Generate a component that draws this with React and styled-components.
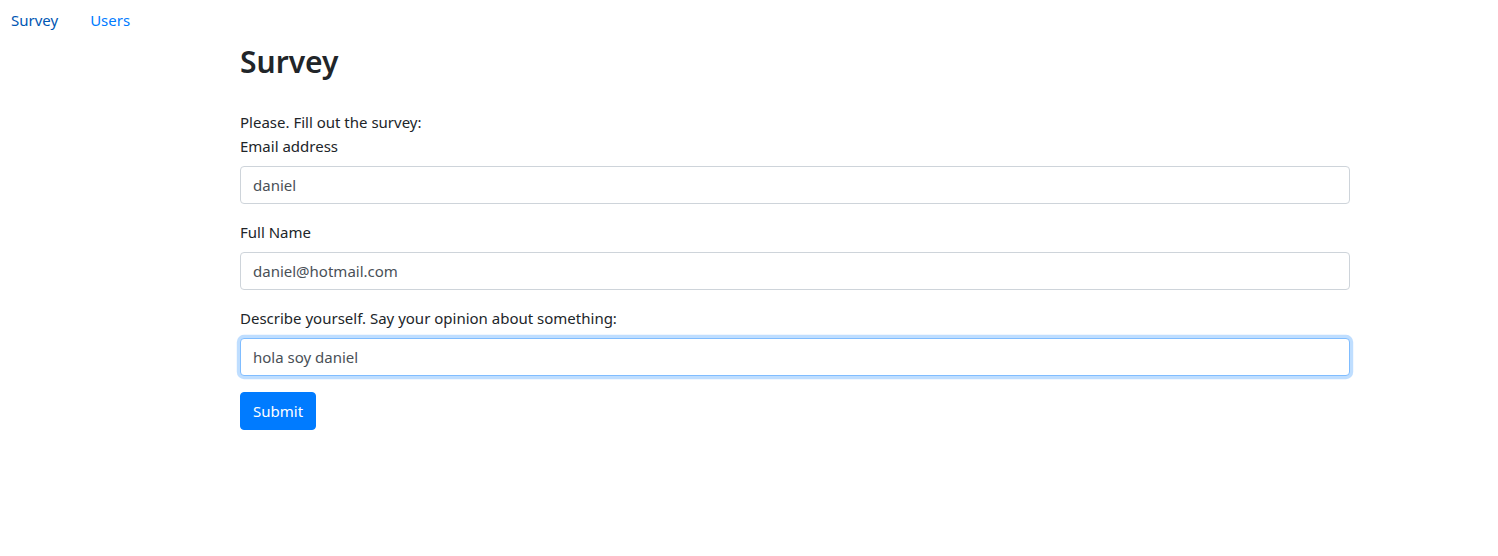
import React from 'react'
import styled, { createGlobalStyle } from 'styled-components'

const GlobalStyle = createGlobalStyle`
  *, *::before, *::after { box-sizing: border-box; }
  body {
    margin: 0;
    font-family: "Noto Sans", "Open Sans", sans-serif;
    font-size: 15px;
    line-height: 24px;
    color: #212529;
    background: #fff;
  }
`

const Nav = styled.nav`
  display: flex;
  gap: 32px;
  padding-left: 11px;
  height: 40px;
  align-items: center;
`

const NavLink = styled.a`
  color: ${props => props.active ? '#0056b3' : '#007bff'};
  text-decoration: none;
`

const Container = styled.main`
  width: 1110px;
  margin-left: 240px;
`

const Title = styled.h1`
  margin: 3px 0 29px;
  font-size: 30px;
  font-weight: 600;
  line-height: 38px;
`

const Intro = styled.p`
  margin: 0;
`

const FormGroup = styled.div`
  margin-bottom: 16px;
`

const Label = styled.label`
  display: block;
  margin-bottom: 8px;
`

const Input = styled.input`
  display: block;
  width: 100%;
  height: 38px;
  padding: 6px 12px;
  font: inherit;
  color: #495057;
  background: #fff;
  border: 1px solid ${props => props.focused ? '#80bdff' : '#ced4da'};
  border-radius: 4px;
  outline: none;
  box-shadow: ${props => props.focused ? '0 0 0 3.2px rgba(0,123,255,.25)' : 'none'};
`

const Button = styled.button`
  display: inline-block;
  height: 38px;
  padding: 6px 12px;
  font: inherit;
  line-height: 24px;
  color: #fff;
  background: #007bff;
  border: 1px solid #007bff;
  border-radius: 4px;
`

const fields = [
  { label: 'Email address', value: 'daniel' },
  { label: 'Full Name', value: 'daniel@hotmail.com' },
  { label: 'Describe yourself. Say your opinion about something:', value: 'hola soy daniel', focused: true },
]

const App = () => {
  return (
    <>
      <GlobalStyle />
      <Nav>
        <NavLink href="#" active>Survey</NavLink>
        <NavLink href="#">Users</NavLink>
      </Nav>
      <Container>
        <Title>Survey</Title>
        <Intro>Please. Fill out the survey:</Intro>
        <form onSubmit={e => e.preventDefault()}>
          {fields.map(f => (
            <FormGroup key={f.label}>
              <Label>{f.label}</Label>
              <Input defaultValue={f.value} focused={f.focused} />
            </FormGroup>
          ))}
          <Button type="submit">Submit</Button>
        </form>
      </Container>
    </>
  )
}

export default App
